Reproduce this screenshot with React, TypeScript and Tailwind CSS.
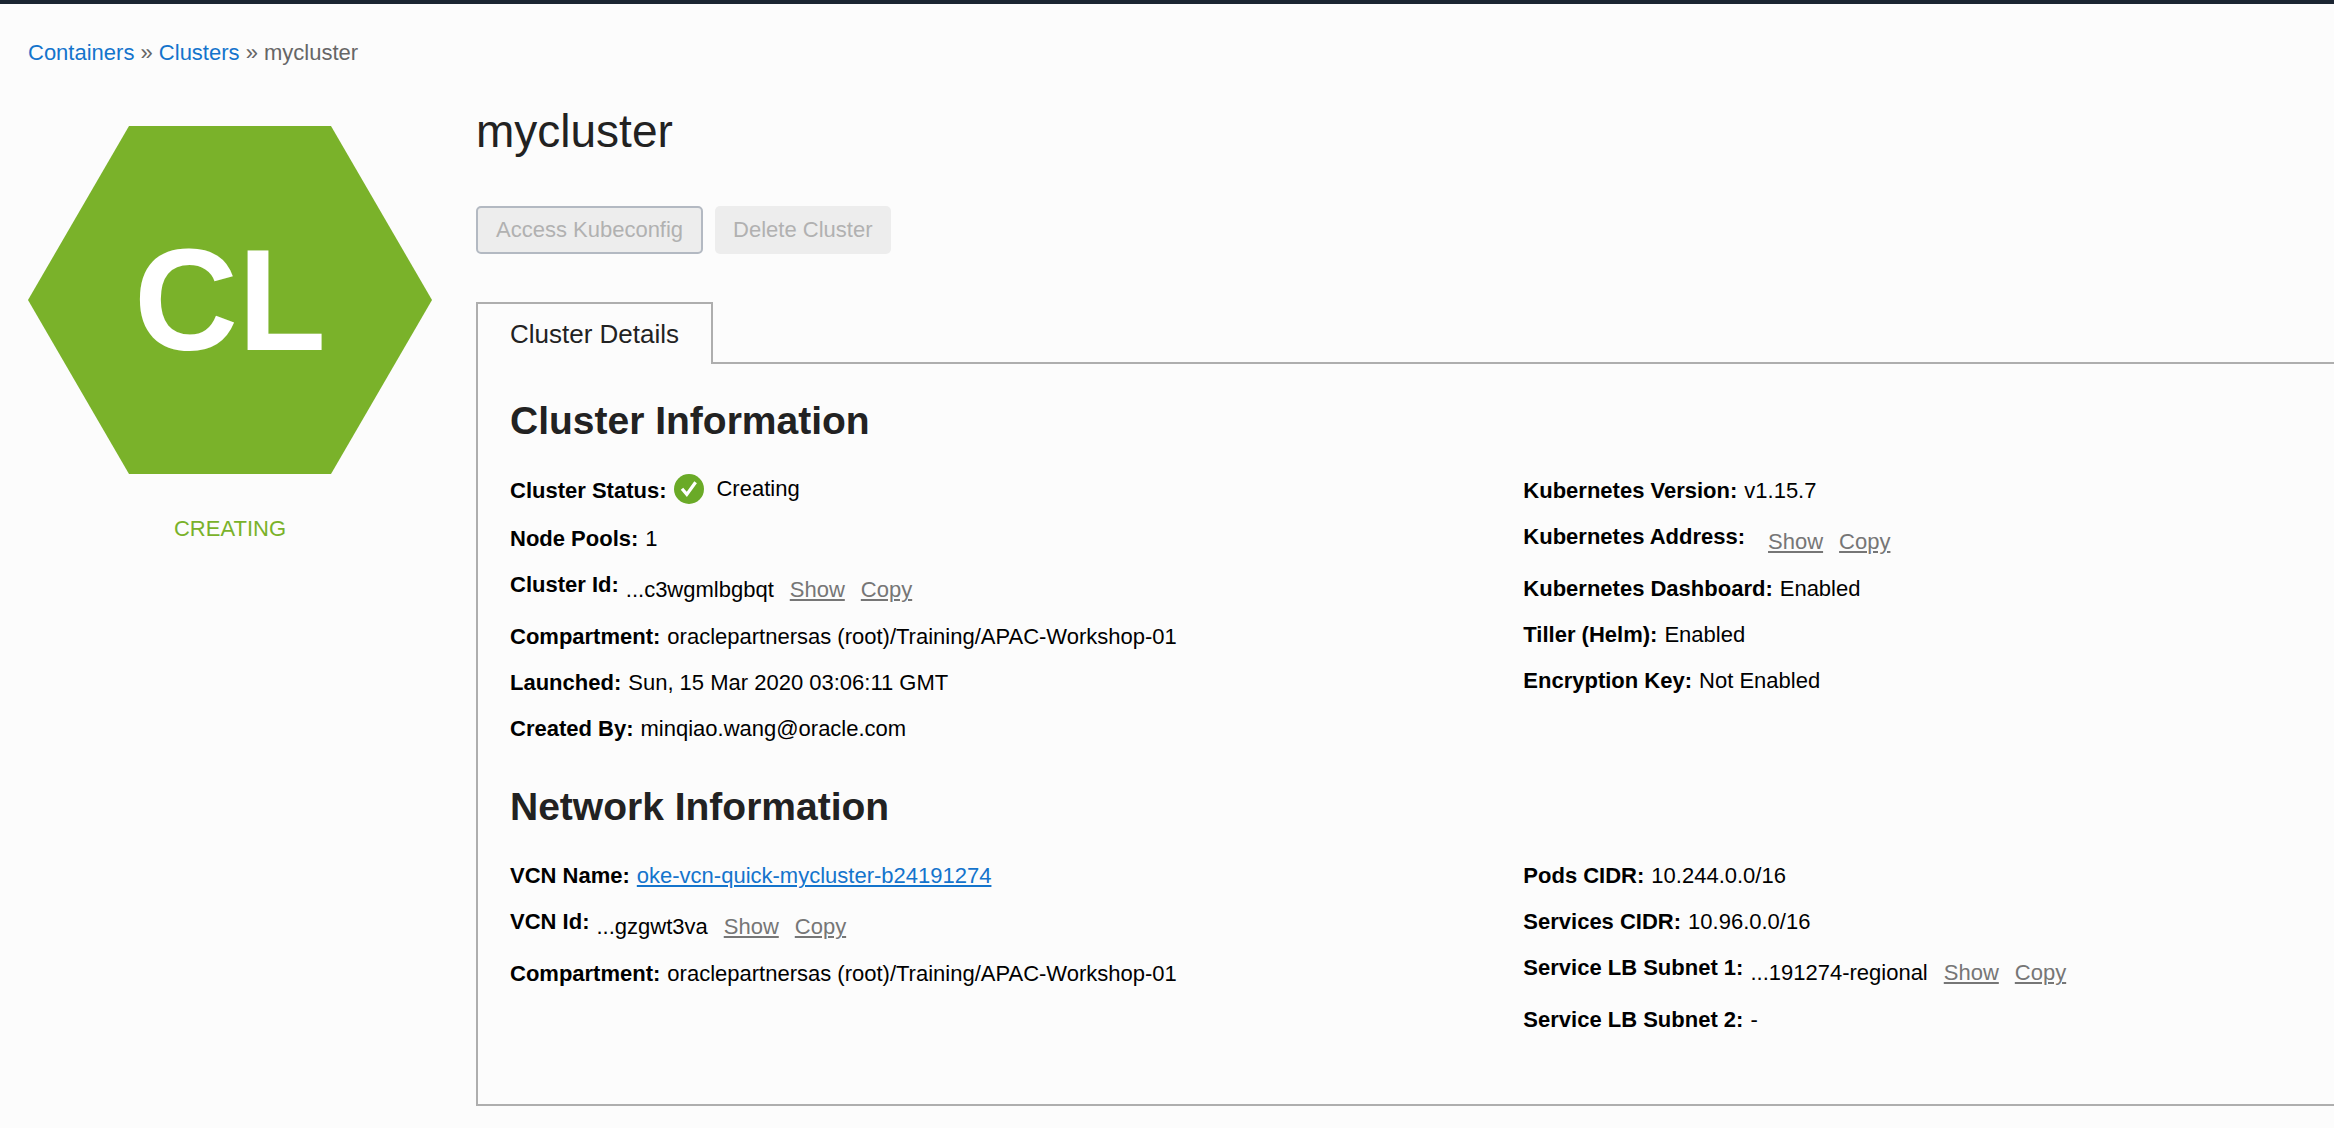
import type { ReactNode } from "react";

type FieldProps = { label: string; children?: ReactNode };

function Field({ label, children }: FieldProps) {
  return (
    <div className="flex items-start gap-[7px] pb-4">
      <dt className="font-bold">{label}:</dt>
      <dd>{children}</dd>
    </div>
  );
}

function StatusField({ label, children }: FieldProps) {
  return (
    <div className="flex items-start gap-2 pb-[18px]">
      <dt className="pt-0.5 font-bold">{label}:</dt>
      <dd className="flex items-center gap-3">
        <svg viewBox="0 0 30 30" className="size-[30px]" aria-hidden="true">
          <circle cx="15" cy="15" r="15" fill="#6aaa27" />
          <path
            d="M8 14.8l4.8 5.6L21.6 8.2"
            fill="none"
            stroke="#fff"
            strokeWidth="3.2"
          />
        </svg>
        {children}
      </dd>
    </div>
  );
}

function ShortenedField({ label, value }: { label: string; value?: string }) {
  return (
    <div className="flex items-start gap-[7px] pb-[17px]">
      <dt className="font-bold">{label}:</dt>
      <dd className="flex gap-4 pt-[5px]">
        <span>{value}</span>
        <button type="button" className="text-[#767676] underline decoration-2 underline-offset-2">
          Show
        </button>
        <button type="button" className="text-[#767676] underline decoration-2 underline-offset-2">
          Copy
        </button>
      </dd>
    </div>
  );
}

export default function App() {
  return (
    <div className="min-h-screen border-t-4 border-[#1b2532] bg-[#fcfcfc] font-['Liberation_Sans',Arial,sans-serif] text-[22px] leading-[30px] text-black">
      <nav aria-label="Breadcrumb" className="px-7 pt-[34px] text-[#666]">
        <a href="#containers" className="text-[#1474cc]">Containers</a>
        {" » "}
        <a href="#clusters" className="text-[#1474cc]">Clusters</a>
        {" » mycluster"}
      </nav>

      <div className="flex gap-11 pl-7">
        <aside className="w-[404px] shrink-0 pt-[58px] text-center">
          <div className="flex h-[348px] items-center justify-center bg-[#7ab22a] pt-0.5 text-[144px] leading-none font-bold text-white [clip-path:polygon(25%_0,75%_0,100%_50%,75%_100%,25%_100%,0_50%)]">
            CL
          </div>
          <p className="pt-10 text-[#7ab22a]">CREATING</p>
        </aside>

        <main className="min-w-0 grow pt-[39px]">
          <h1 className="text-[46px] leading-[48px] text-[#222]">mycluster</h1>

          <div className="flex gap-3 pt-[51px]">
            <button
              type="button"
              disabled
              className="h-12 rounded-[5px] border-2 border-[#b3b9c2] bg-[#ededed] px-[18px] text-[#b1b1b1]"
            >
              Access Kubeconfig
            </button>
            <button
              type="button"
              disabled
              className="h-12 rounded-[5px] bg-[#ededed] px-[18px] text-[#b1b1b1]"
            >
              Delete Cluster
            </button>
          </div>

          <div role="tablist" className="flex pt-12">
            <button
              type="button"
              role="tab"
              aria-selected="true"
              className="h-[62px] border-2 border-b-0 border-[#aeaeae] px-8 text-[26px] text-[#222]"
            >
              Cluster Details
            </button>
            <div className="grow border-b-2 border-[#aeaeae]" />
          </div>

          <div role="tabpanel" className="border-b-2 border-l-2 border-[#aeaeae] pb-[53px] pl-8">
            <section>
              <h2 className="pt-[35px] text-[39px] leading-[44px] font-bold text-[#222]">
                Cluster Information
              </h2>
              <div className="grid grid-cols-[5fr_4fr] pt-[31px]">
                <dl>
                  <StatusField label="Cluster Status">Creating</StatusField>
                  <Field label="Node Pools">1</Field>
                  <ShortenedField label="Cluster Id" value="...c3wgmlbgbqt" />
                  <Field label="Compartment">
                    oraclepartnersas (root)/Training/APAC-Workshop-01
                  </Field>
                  <Field label="Launched">Sun, 15 Mar 2020 03:06:11 GMT</Field>
                  <Field label="Created By">minqiao.wang@oracle.com</Field>
                </dl>
                <dl className="pt-0.5">
                  <Field label="Kubernetes Version">v1.15.7</Field>
                  <ShortenedField label="Kubernetes Address" />
                  <Field label="Kubernetes Dashboard">Enabled</Field>
                  <Field label="Tiller (Helm)">Enabled</Field>
                  <Field label="Encryption Key">Not Enabled</Field>
                </dl>
              </div>
            </section>

            <section>
              <h2 className="pt-[25px] text-[39px] leading-[44px] font-bold text-[#222]">
                Network Information
              </h2>
              <div className="grid grid-cols-[5fr_4fr] pt-8">
                <dl>
                  <Field label="VCN Name">
                    <a
                      href="#vcn"
                      className="text-[#1474cc] underline decoration-2 underline-offset-2"
                    >
                      oke-vcn-quick-mycluster-b24191274
                    </a>
                  </Field>
                  <ShortenedField label="VCN Id" value="...gzgwt3va" />
                  <Field label="Compartment">
                    oraclepartnersas (root)/Training/APAC-Workshop-01
                  </Field>
                </dl>
                <dl>
                  <Field label="Pods CIDR">10.244.0.0/16</Field>
                  <Field label="Services CIDR">10.96.0.0/16</Field>
                  <ShortenedField label="Service LB Subnet 1" value="...191274-regional" />
                  <Field label="Service LB Subnet 2">-</Field>
                </dl>
              </div>
            </section>
          </div>
        </main>
      </div>
    </div>
  );
}
